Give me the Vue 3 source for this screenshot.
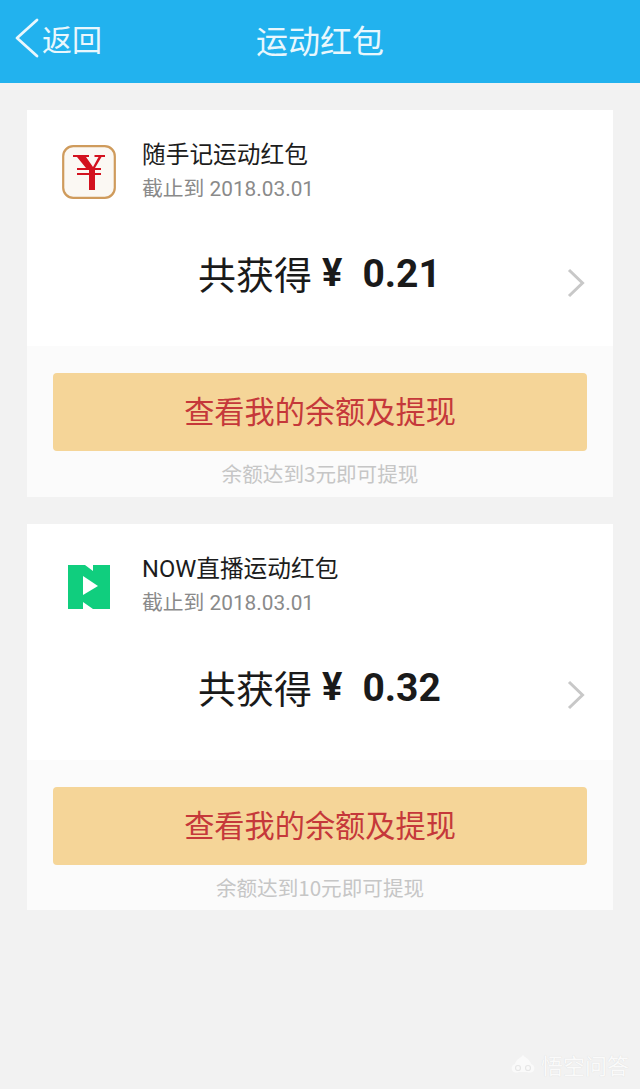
<script setup>
const packets = [
  { id: 'ssj', name: '随手记运动红包', deadline: '2018.03.01', amount: '0.21', hint: '余额达到3元即可提现', icon: 'ssj', arrowTop: 158 },
  { id: 'now', name: 'NOW直播运动红包', deadline: '2018.03.01', amount: '0.32', hint: '余额达到10元即可提现', icon: 'now', arrowTop: 156 },
]
</script>

<template>
  <div class="page">
    <header class="nav">
      <div class="back">
        <svg class="back-arrow" viewBox="0 0 26 40" fill="none">
          <path d="M23 2 L3 20 L23 38" stroke="#e9f7fd" stroke-width="2.800" stroke-linecap="round" stroke-linejoin="round" />
        </svg>
        <span class="back-text">返回</span>
      </div>
      <h1 class="nav-title">运动红包</h1>
    </header>

    <main class="list">
      <section v-for="item in packets" :key="item.id" class="card">
        <div class="card-top">
          <div class="info">
            <div class="logo">
              <svg v-if="item.icon === 'ssj'" width="54" height="54" viewBox="0 0 54 54">
                <rect x="1.200" y="1.200" width="51.600" height="51.600" rx="10" fill="#fbf8f3" stroke="#cf9b5c" stroke-width="2.200" />
                <path d="M11 10 H27 V12 H24 L31 22 L36.500 12 H32.500 V10 H43 V12 H39.500 L33 23 H39 V25 H33 V28 H39 V30 H33 V45 H27 V30 H15 V28 H27 V25 H15 V23 H24 L15 12 H11 Z" fill="#d3121f" />
              </svg>
              <svg v-else class="logo-now" width="42" height="44" viewBox="0 0 42 44">
                <path d="M0 0 H17 L25 6 V0 H42 V44 H25 L15 37 V44 H0 Z" fill="#10ce7e" />
                <path d="M15 11 L30 21 L15 30 Z" fill="#fff" />
              </svg>
            </div>
            <div class="meta">
              <div class="name">{{ item.name }}</div>
              <div class="deadline">截止到 {{ item.deadline }}</div>
            </div>
          </div>
          <div class="total">
            <span class="total-label">共获得</span>
            <span class="total-yen">¥</span>
            <span class="total-num">{{ item.amount }}</span>
          </div>
          <svg class="chevron" :style="{ top: item.arrowTop + 'px' }" viewBox="0 0 18 30" fill="none">
            <path d="M2 2 L15.500 15 L2 28" stroke="#c8c8c8" stroke-width="3" />
          </svg>
        </div>
        <div class="card-bottom">
          <button class="withdraw">查看我的余额及提现</button>
          <div class="hint">{{ item.hint }}</div>
        </div>
      </section>
    </main>

    <div class="watermark">
      <svg width="26" height="20" viewBox="0 0 26 20" fill="none">
        <path d="M13 1 C15 4 20 5 21 10 C24 11 25 14 24 16 C23 19 19 19 17 18 H9 C7 19 3 19 2 16 C1 14 2 11 5 10 C6 5 11 4 13 1 Z" fill="#fafafa" />
        <circle cx="8" cy="14" r="2.500" stroke="#e6e6e6" stroke-width="1.200" />
        <circle cx="18" cy="14" r="2.500" stroke="#e6e6e6" stroke-width="1.200" />
      </svg>
      <span>悟空问答</span>
    </div>
  </div>
</template>

<style scoped>
.page {
  position: relative;
  width: 640px;
  height: 1089px;
  overflow: hidden;
  background: #f2f2f2;
  font-family: "Noto Sans CJK SC", "Roboto", sans-serif;
}

.nav {
  position: relative;
  height: 83px;
  background: #22b2ee;
  display: flex;
  align-items: center;
  justify-content: center;
  color: #fff;
}

.back {
  position: absolute;
  left: 14px;
  top: 18px;
  display: flex;
  align-items: center;
  gap: 2px;
}

.back-arrow {
  width: 26px;
  height: 40px;
}

.back-text {
  font-size: 30px;
  line-height: 40px;
  color: #e9f7fd;
}

.nav-title {
  margin: 0 0 6px;
  font-size: 32px;
  font-weight: 400;
  line-height: 40px;
  color: #e9f7fd;
}

.list {
  display: flex;
  flex-direction: column;
  gap: 27px;
  padding: 27px 27px 0;
}

.card {
  height: 387px;
  display: flex;
  flex-direction: column;
}

.card:last-child {
  height: 386px;
}

.card-top {
  position: relative;
  height: 236px;
  background: #fff;
}

.info {
  display: flex;
  align-items: flex-start;
  padding: 28px 0 0 35px;
}

.logo {
  width: 54px;
  height: 54px;
  margin-top: 7px;
  display: flex;
  align-items: center;
  justify-content: center;
}

.logo-now {
  margin-top: 1px;
}

.meta {
  margin-left: 26px;
  margin-top: 1px;
}

.name {
  font-family: "Roboto", "Noto Sans CJK SC", sans-serif;
  font-size: 23.700px;
  line-height: 32px;
  color: #1c1c1c;
}

.deadline {
  font-size: 20.800px;
  line-height: 28px;
  margin-top: 4px;
  color: #8a8a8a;
  font-family: "Roboto", "Noto Sans CJK SC", sans-serif;
}

.total {
  display: flex;
  align-items: center;
  padding-left: 171px;
  margin-top: 43px;
  height: 54px;
  color: #1a1a1a;
}

.total-label {
  font-size: 38px;
  line-height: 54px;
}

.total-yen {
  font-family: "Roboto", sans-serif;
  font-size: 38px;
  font-weight: 700;
  margin-left: 10px;
}

.total-num {
  font-family: "Roboto", sans-serif;
  font-size: 39px;
  font-weight: 700;
  margin-left: 20px;
  padding-top: 2px;
}

.chevron {
  position: absolute;
  right: 28px;
  width: 18px;
  height: 30px;
}

.card-bottom {
  flex: 1;
  background: #fbfbfb;
  padding: 27px 26px 0;
  text-align: center;
}

.withdraw {
  display: block;
  width: 100%;
  height: 78px;
  border: none;
  border-radius: 4px;
  background: #f5d598;
  color: #c5383a;
  font-family: inherit;
  font-size: 30.200px;
  line-height: 74px;
  padding: 0 0 4px;
}

.hint {
  margin-top: 7px;
  font-size: 20.600px;
  line-height: 30px;
  color: #c6c6c6;
}

.watermark {
  position: absolute;
  right: 11px;
  bottom: 12px;
  display: flex;
  align-items: center;
  gap: 5px;
  color: #fafafa;
  font-size: 22px;
  line-height: 26px;
  text-shadow: 0 0 1px rgba(0, 0, 0, 0.12);
}
</style>
